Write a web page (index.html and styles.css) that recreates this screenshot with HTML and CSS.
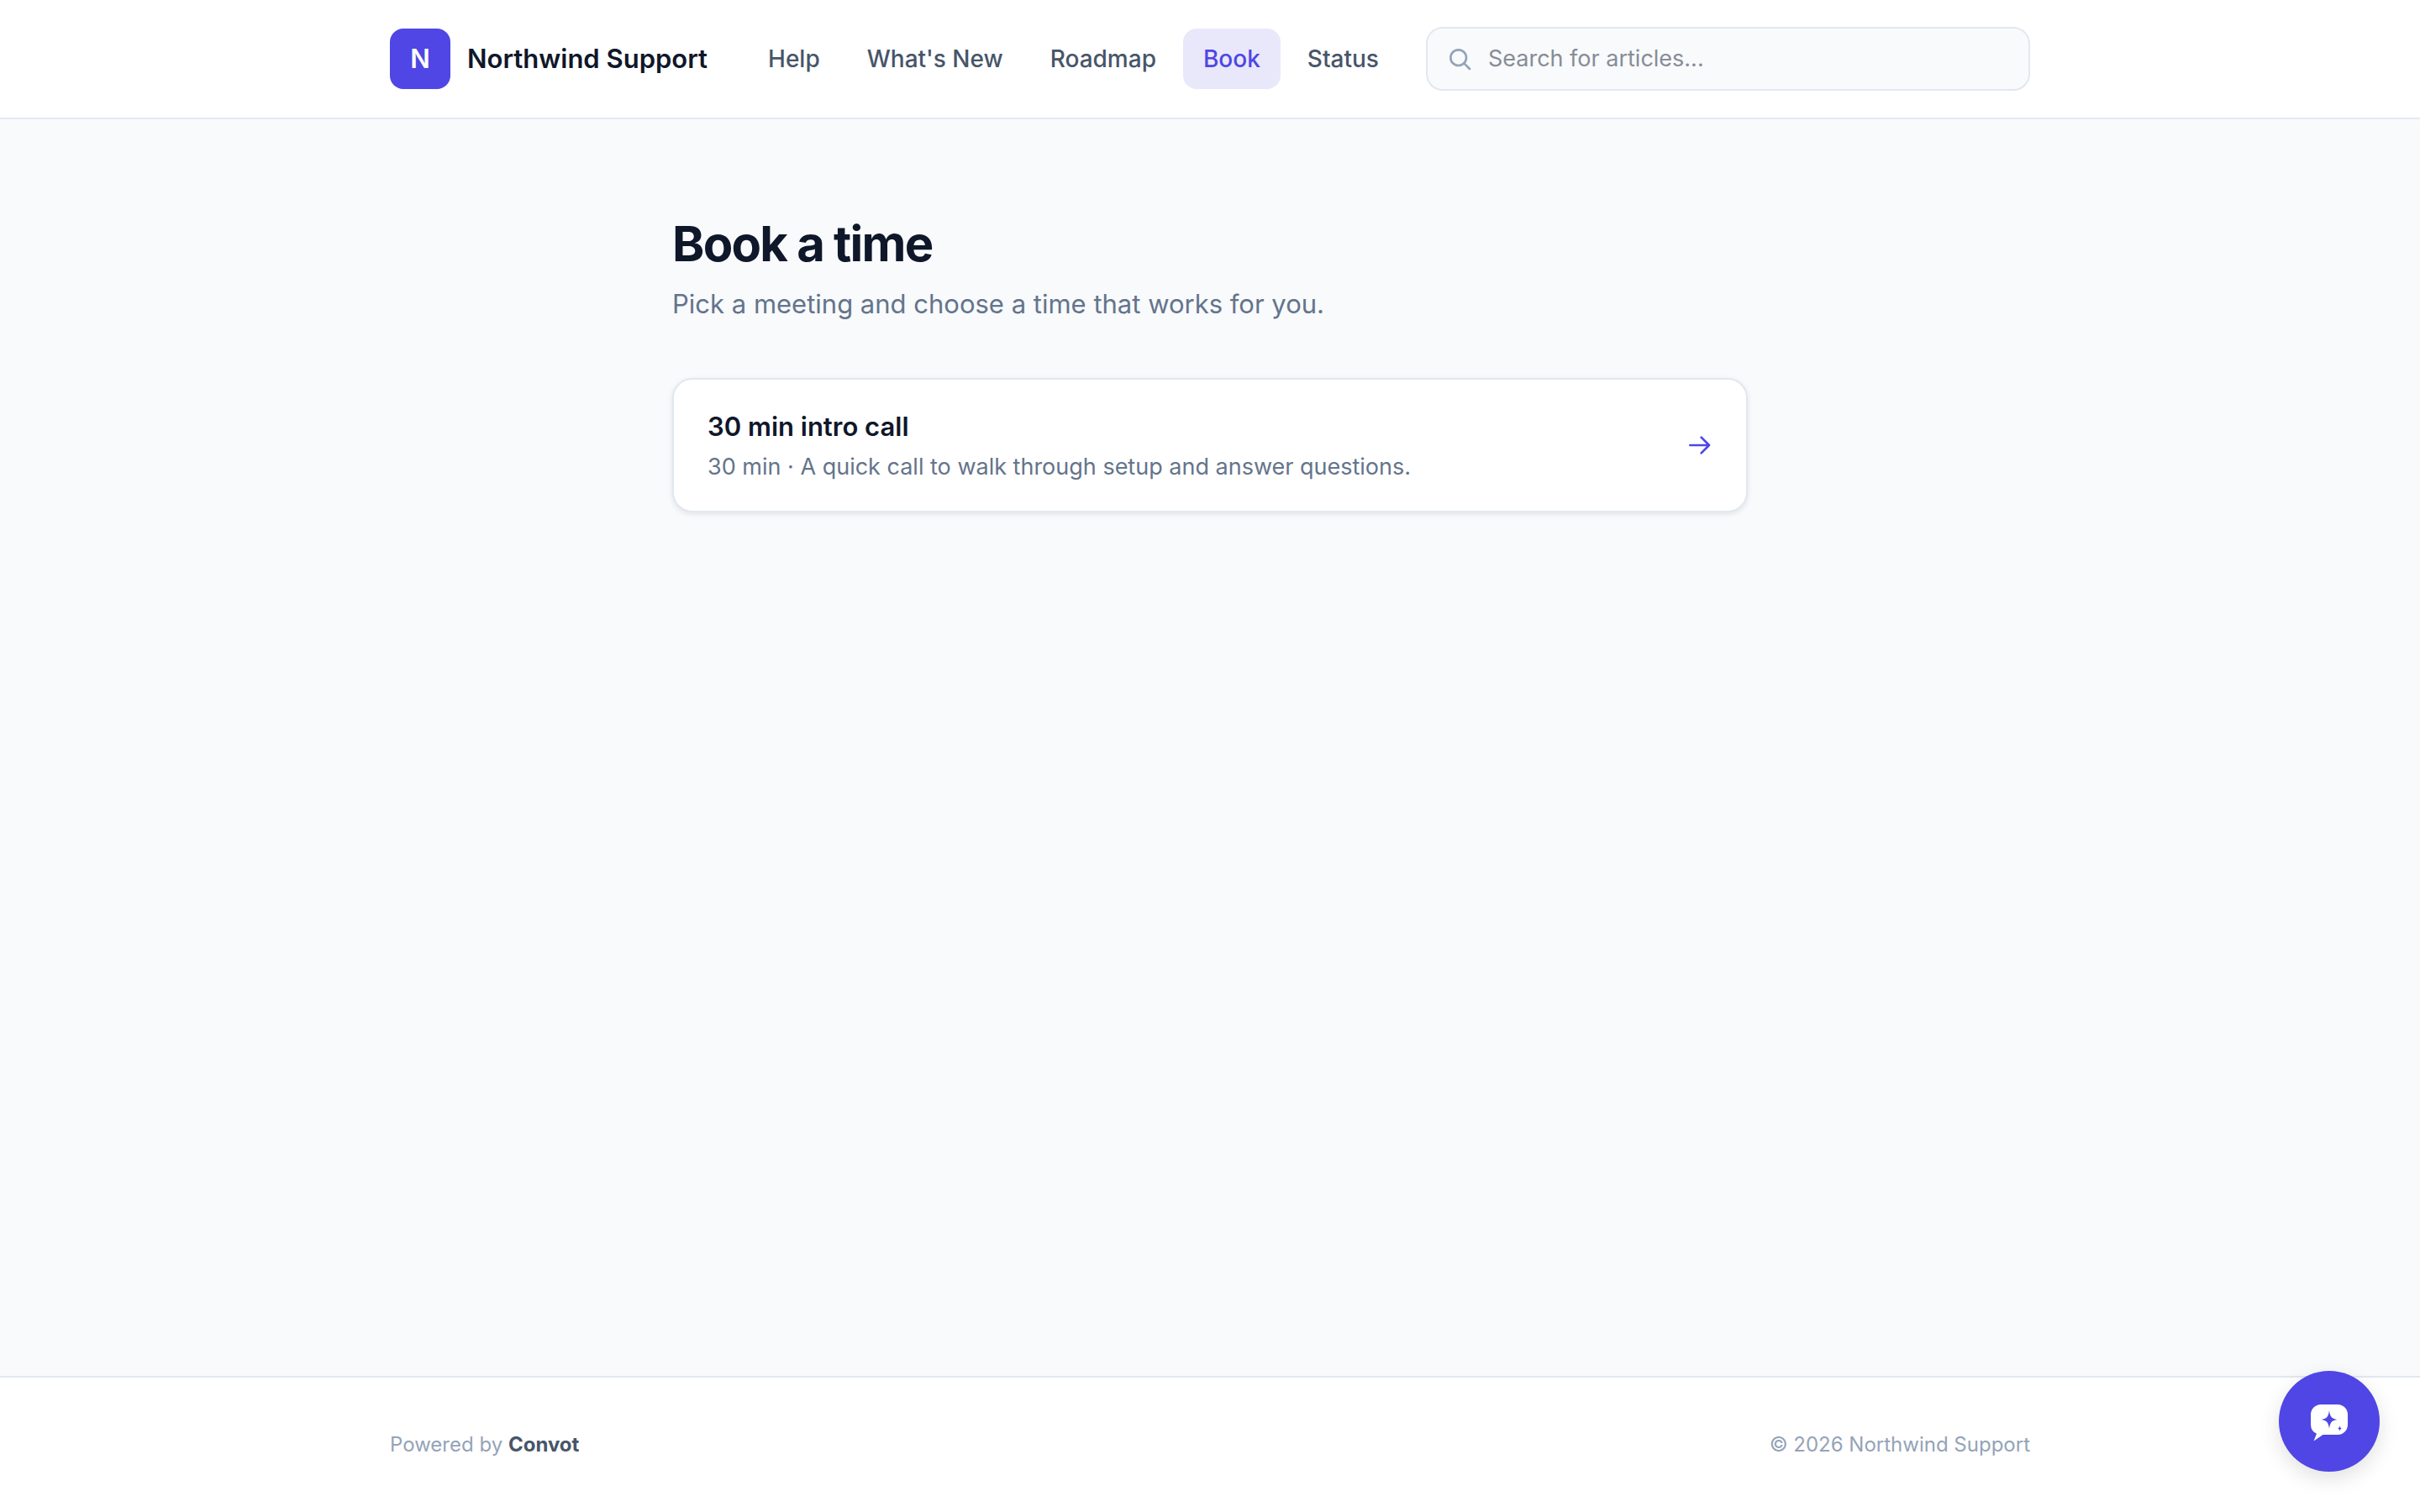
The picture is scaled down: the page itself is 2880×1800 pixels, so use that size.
FILE: index.html
```html
<!DOCTYPE html>
<html lang="en">
<head>
    <meta charset="UTF-8">
    <meta name="viewport" content="width=device-width, initial-scale=1.0">
    <title>Book a time - Northwind Support</title>
    <link rel="stylesheet" href="styles.css">
</head>
<body>
    <!-- Header -->
    <header class="header">
        <div class="container header-inner">
            <a class="brand" href="#">
                <span class="brand-logo">N</span>
                <span class="brand-name">Northwind Support</span>
            </a>
            <nav class="nav">
                <a class="nav-link" href="#">Help</a>
                <a class="nav-link" href="#">What's New</a>
                <a class="nav-link" href="#">Roadmap</a>
                <a class="nav-link active" href="#" aria-current="page">Book</a>
                <a class="nav-link" href="#">Status</a>
            </nav>
            <label class="search">
                <svg class="icon" viewBox="0 0 24 24" aria-hidden="true">
                    <circle cx="11" cy="11" r="7"/>
                    <path d="M21 21l-4.8-4.8"/>
                </svg>
                <input type="search" placeholder="Search for articles..." aria-label="Search for articles">
            </label>
        </div>
    </header>

    <!-- Meeting list -->
    <main class="main">
        <h1>Book a time</h1>
        <p class="subtitle">Pick a meeting and choose a time that works for you.</p>

        <a class="meeting" href="#">
            <div class="meeting-info">
                <h2>30 min intro call</h2>
                <p>30 min · A quick call to walk through setup and answer questions.</p>
            </div>
            <svg class="icon" viewBox="0 0 24 24" aria-hidden="true">
                <path d="M4 12h17M14 5l7 7-7 7"/>
            </svg>
        </a>
    </main>

    <footer class="footer">
        <div class="container footer-inner">
            <p>Powered by <a href="#">Convot</a></p>
            <p>© 2026 Northwind Support</p>
        </div>
    </footer>

    <!-- Chat widget -->
    <button class="chat-btn" type="button" aria-label="Open chat">
        <svg viewBox="-2 -4 48 48" aria-hidden="true">
            <path class="bubble" d="M12 0h20a12 12 0 0 1 12 12v12a12 12 0 0 1-12 12H14.500L3.500 43.500L7 34.800A12 12 0 0 1 0 24V12A12 12 0 0 1 12 0z"/>
            <path class="spark" d="M22 7c.9 7.200 2.500 9.800 9.500 11c-7 1.200-8.600 3.800-9.500 11c-.9-7.200-2.500-9.800-9.500-11c7-1.200 8.600-3.800 9.500-11z"/>
            <path class="spark" d="M34.500 25c.3 2.400.9 3.200 3 3.500c-2.100.3-2.700 1.100-3 3.500c-.3-2.400-.9-3.200-3-3.500c2.100-.3 2.700-1.100 3-3.500z"/>
        </svg>
    </button>
</body>
</html>
```
FILE: styles.css
```css
* {
    box-sizing: border-box;
    margin: 0;
    padding: 0;
}

body {
    min-height: 100vh;
    display: flex;
    flex-direction: column;
    font-family: Inter, "Liberation Sans", sans-serif;
    font-size: 27px;
    line-height: 40px;
    background-color: #f8fafc;
    color: #0f172a;
}

a {
    color: inherit;
    text-decoration: none;
}

.container {
    width: 100%;
    max-width: 2048px;
    margin: 0 auto;
    padding: 0 48px;
}

.icon {
    flex: none;
    width: 32px;
    height: 32px;
    fill: none;
    stroke: currentColor;
    stroke-width: 2;
    stroke-linecap: round;
    stroke-linejoin: round;
}

/* Header */
.header {
    background-color: white;
    border-bottom: 2px solid #e2e8f0;
}

.header-inner {
    display: flex;
    align-items: center;
    gap: 32px;
    padding-top: 32px;
    padding-bottom: 32px;
}

.brand {
    display: flex;
    align-items: center;
    gap: 20px;
    margin-right: 16px;
    font-size: 31px;
    font-weight: 600;
    white-space: nowrap;
}

.brand-logo {
    width: 72px;
    height: 72px;
    border-radius: 16px;
    background-color: #4f46e5;
    color: white;
    line-height: 72px;
    text-align: center;
}

.nav {
    display: flex;
    gap: 8px;
}

.nav-link {
    padding: 16px 24px;
    border-radius: 16px;
    color: #475569;
    font-size: 28px;
    font-weight: 500;
    white-space: nowrap;
}

.nav-link.active {
    background-color: #e9e8fb;
    color: #4f46e5;
}

.search {
    flex: 1;
    display: flex;
    align-items: center;
    gap: 18px;
    height: 76px;
    padding: 0 22px;
    border: 2px solid #e2e8f0;
    border-radius: 20px;
    background-color: #f8fafc;
    color: #94a3b8;
}

.search input {
    flex: 1;
    min-width: 0;
    border: none;
    outline: none;
    background: none;
    font: inherit;
    color: #0f172a;
}

.search input::placeholder {
    color: #878c96;
}

/* Meeting list */
.main {
    flex: 1;
    width: 100%;
    max-width: 1376px;
    margin: 0 auto;
    padding: 112px 48px;
}

h1 {
    font-size: 58px;
    font-weight: 700;
    line-height: 72px;
    letter-spacing: -0.03em;
}

.subtitle {
    margin-top: 12px;
    font-size: 31px;
    line-height: 48px;
    color: #64748b;
}

.meeting {
    display: flex;
    align-items: center;
    justify-content: space-between;
    margin-top: 64px;
    padding: 32px 40px;
    border: 2px solid #e2e8f0;
    border-radius: 24px;
    background-color: white;
    box-shadow: 0 2px 6px rgba(15, 23, 42, 0.1);
}

.meeting h2 {
    font-size: 31px;
    font-weight: 600;
    line-height: 48px;
}

.meeting p {
    margin-top: 4px;
    color: #64748b;
}

.meeting .icon {
    color: #4f46e5;
}

/* Footer */
.footer {
    background-color: white;
    border-top: 2px solid #e2e8f0;
    font-size: 24px;
    line-height: 32px;
    color: #94a3b8;
}

.footer-inner {
    display: flex;
    justify-content: space-between;
    padding-top: 64px;
    padding-bottom: 64px;
}

.footer a {
    color: #475569;
    font-weight: 700;
}

/* Chat widget */
.chat-btn {
    position: fixed;
    right: 48px;
    bottom: 48px;
    display: flex;
    align-items: center;
    justify-content: center;
    width: 120px;
    height: 120px;
    border: none;
    border-radius: 50%;
    background-color: #4f46e5;
    box-shadow: 0 8px 24px rgba(0, 0, 0, 0.12);
    cursor: pointer;
}

.chat-btn svg {
    width: 48px;
    height: 48px;
}

.bubble {
    fill: white;
}

.spark {
    fill: #4f46e5;
}
```
